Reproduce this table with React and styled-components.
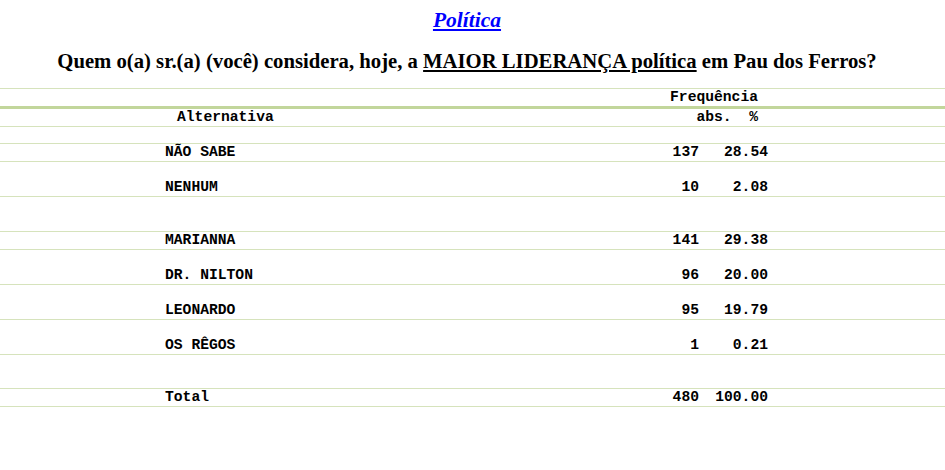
import React from "react";
import styled, { createGlobalStyle } from "styled-components";

const Global = createGlobalStyle`
  html, body { margin: 0; padding: 0; background: #ffffff; }
  body { font-family: "Liberation Serif", serif; color: #000; }
`;

const Page = styled.div`
  width: 945px;
  padding-top: 8px;
`;

const Section = styled.div`
  padding-right: 11px;
  text-align: center;
  font: italic bold 21.5px/24px "Liberation Serif", serif;
`;

const SectionLink = styled.a`
  color: #0000ff;
  text-decoration: underline;
`;

const Question = styled.h2`
  margin: 16px 0 14px;
  padding-right: 11px;
  text-align: center;
  font: bold 20.7px/26px "Liberation Serif", serif;
  color: #000;
`;

const Emph = styled.span`
  text-decoration: underline;
`;

const Table = styled.div`
  border-top: 1px solid #d6e3bc;
  font: bold 14.67px/17px "Liberation Mono", "Courier New", monospace;
  color: #000;
`;

const Row = styled.div`
  display: grid;
  grid-template-columns: 165px 469px 65px 69px 1fr;
  align-items: end;
  height: ${(p) => p.$h + 1}px;
  border-bottom: ${(p) => (p.$thick ? "3px solid #c2d69b" : "1px solid #d6e3bc")};
  white-space: pre;
`;

const Label = styled.div`
  grid-column: 2;
  padding-left: ${(p) => (p.$indent ? 12 : 0)}px;
`;

const Num = styled.div`
  grid-column: ${(p) => p.$col};
  text-align: right;
`;

const HeadRight = styled.div`
  grid-column: 3 / 5;
  text-align: right;
  padding-right: 10px;
`;

const rows = [
  { h: 15, label: "", abs: "", pct: "" },
  { h: 16, label: "NÃO SABE", abs: "137", pct: "28.54" },
  { h: 33, label: "NENHUM", abs: "10", pct: "2.08" },
  { h: 33, label: "", abs: "", pct: "" },
  { h: 16, label: "MARIANNA", abs: "141", pct: "29.38" },
  { h: 33, label: "DR. NILTON", abs: "96", pct: "20.00" },
  { h: 33, label: "LEONARDO", abs: "95", pct: "19.79" },
  { h: 33, label: "OS RÊGOS", abs: "1", pct: "0.21" },
  { h: 32, label: "", abs: "", pct: "" },
  { h: 16, label: "Total", abs: "480", pct: "100.00" },
];

export default function App() {
  return (
    <Page>
      <Global />
      <Section>
        <SectionLink href="#">Política</SectionLink>
      </Section>
      <Question>
        Quem o(a) sr.(a) (você) considera, hoje, a <Emph>MAIOR LIDERANÇA política</Emph> em Pau dos Ferros?
      </Question>
      <Table>
        <Row $h={16} $thick>
          <HeadRight>Frequência</HeadRight>
        </Row>
        <Row $h={16}>
          <Label $indent>Alternativa</Label>
          <HeadRight>{"abs.  %"}</HeadRight>
        </Row>
        {rows.map((r, i) => (
          <Row key={i} $h={r.h}>
            <Label>{r.label}</Label>
            <Num $col={3}>{r.abs}</Num>
            <Num $col={4}>{r.pct}</Num>
          </Row>
        ))}
      </Table>
    </Page>
  );
}
